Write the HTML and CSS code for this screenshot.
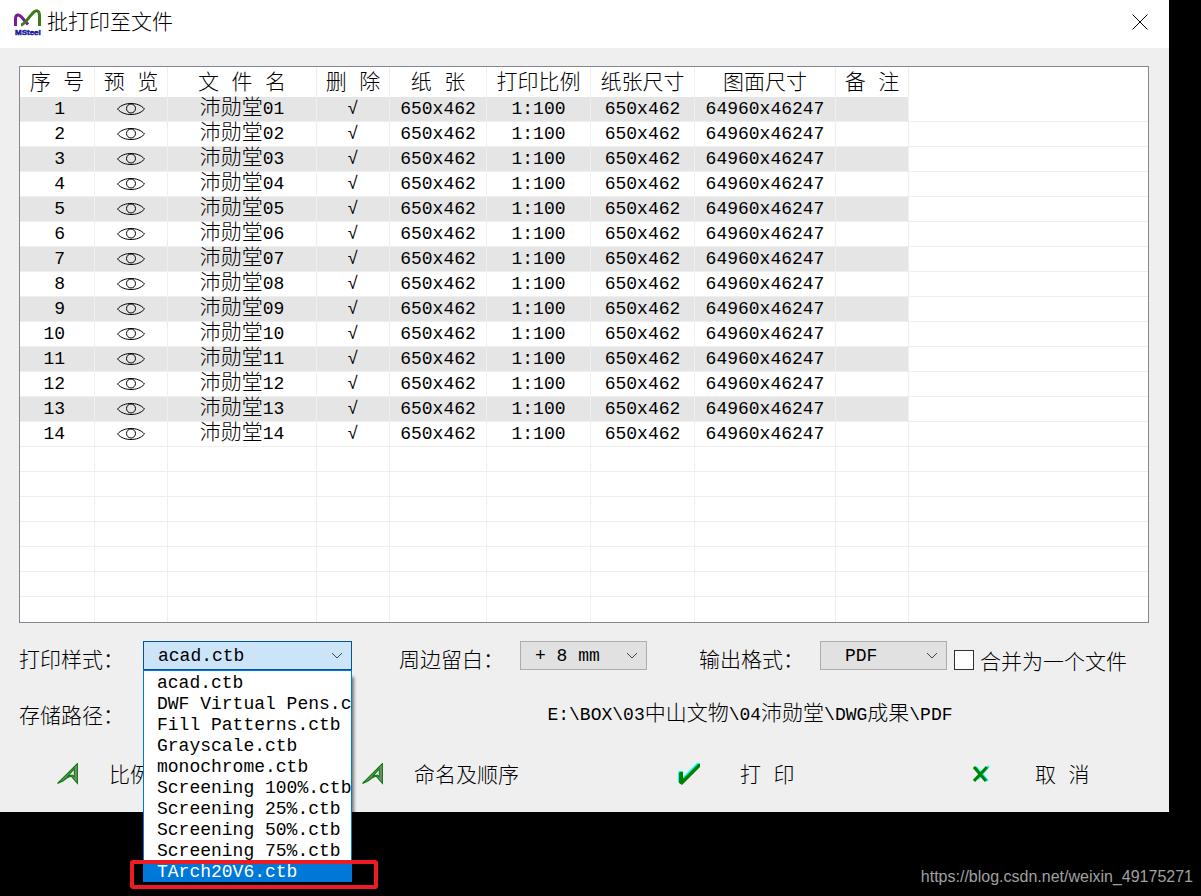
FILE: index.html
```html
<!DOCTYPE html>
<html lang="zh-CN">
	<head>
		<meta charset="UTF-8">
		<title>批打印至文件</title>
		<link rel="stylesheet" href="styles.css">
	</head>
	<body>
		<svg class="symbols">
			<symbol id="eye" viewBox="0 0 28 14">
				<path d="M0.5 7C4 3 9 1.5 14 1.5S24 3 27.5 7C24 11 19 12.5 14 12.5S4 11 0.5 7Z" fill="none" stroke="#000"/>
				<circle cx="14" cy="6.5" r="4.5" fill="none" stroke="#000"/>
			</symbol>
			<symbol id="arrow" viewBox="0 0 21 21">
				<path d="M0.5 19.5L19.5 0.5V19.5L13.5 12.5Q9 14 6 17Z" fill="#808080" stroke="#008000"/>
				<path d="M16.5 5.5V13L14.5 11.5L10.5 12.5Z" fill="#efefef" stroke="#008000"/>
			</symbol>
		</svg>
		<div class="window">
			<div class="title">
				<svg class="logo" viewBox="0 0 27 27">
					<path d="M1.5 17V10C1.5 5 5 5 7.5 8L14 15.5" fill="none" stroke="#7a1a9a" stroke-width="3"/>
					<path d="M7 16C11 15.5 14 9 18 5C22 0 25.5 1 25.5 7V17" fill="none" stroke="#3c7a1e" stroke-width="3"/>
					<text x="1" y="26" class="logo-text">MSteel</text>
				</svg>
				<h3>批打印至文件</h3>
				<button class="close" aria-label="关闭">
					<svg viewBox="0 0 16 16"><path d="M0.5 0.5L15.5 15.5M15.5 0.5L0.5 15.5" stroke="#000"/></svg>
				</button>
			</div>
			<div class="content">
				<div class="list">
					<table>
						<colgroup>
							<col class="c-id"><col class="c-small"><col class="c-name"><col class="c-small"><col class="c-paper">
							<col class="c-size"><col class="c-size"><col class="c-draw"><col class="c-small"><col>
						</colgroup>
						<thead>
							<tr>
								<th>序 号</th>
								<th>预 览</th>
								<th>文 件 名</th>
								<th>删 除</th>
								<th>纸 张</th>
								<th>打印比例</th>
								<th>纸张尺寸</th>
								<th>图面尺寸</th>
								<th>备 注</th>
								<td></td>
							</tr>
						</thead>
						<tbody></tbody>
					</table>
				</div>
				<div class="options">
					<label for="style">打印样式：</label>
					<div class="combo">
						<select id="style" class="wide open">
							<option>acad.ctb</option>
						</select>
						<svg class="down" viewBox="0 0 12 7"><path d="M1 1L6 6L11 1" fill="none" stroke="#444"/></svg>
						<div class="drop">
							<ul role="listbox" aria-label="打印样式">
								<li role="option">acad.ctb</li>
								<li role="option">DWF Virtual Pens.ctb</li>
								<li role="option">Fill Patterns.ctb</li>
								<li role="option">Grayscale.ctb</li>
								<li role="option">monochrome.ctb</li>
								<li role="option">Screening 100%.ctb</li>
								<li role="option">Screening 25%.ctb</li>
								<li role="option">Screening 50%.ctb</li>
								<li role="option">Screening 75%.ctb</li>
								<li role="option" class="active" aria-selected="true">TArch20V6.ctb</li>
							</ul>
							<div class="mark"></div>
						</div>
					</div>
					<label for="margin">周边留白：</label>
					<div class="combo">
						<select id="margin">
							<option>+ 8 mm</option>
						</select>
						<svg class="down" viewBox="0 0 12 7"><path d="M1 1L6 6L11 1" fill="none" stroke="#444"/></svg>
					</div>
					<label for="format">输出格式：</label>
					<div class="combo">
						<select id="format" class="format">
							<option>PDF</option>
						</select>
						<svg class="down" viewBox="0 0 12 7"><path d="M1 1L6 6L11 1" fill="none" stroke="#444"/></svg>
					</div>
					<label class="merge"><input type="checkbox">合并为一个文件</label>
				</div>
				<div class="path">
					<span class="caption">存储路径：</span>
					<span class="dir">E:\BOX\03<span class="cn">中山文物</span>\04<span class="cn">沛勋堂</span>\DWG<span class="cn">成果</span>\PDF</span>
				</div>
				<div class="buttons">
					<button><svg viewBox="0 0 21 21"><use href="#arrow"/></svg>比例</button>
					<button><svg viewBox="0 0 21 21"><use href="#arrow"/></svg>命名及顺序</button>
					<button class="main">
						<svg viewBox="0 0 22 22">
							<path d="M0 10L1 8H5V14L19 0H22V3L4 21L0 19Z" fill="#00ffff"/>
							<path d="M1 10L2 9H5V15H6L20 1H22V4L4 22L1 20Z" fill="#008000"/>
						</svg>打 印
					</button>
					<button class="main">
						<svg viewBox="0 0 22 22">
							<path d="M3 4L15 18M16 3L5 16" stroke="#00ffff" stroke-width="2"/>
							<path d="M1 4L13 18M14 4L1 18" stroke="#008000" stroke-width="3"/>
						</svg>取 消
					</button>
				</div>
			</div>
		</div>
		<a class="source" href="https://blog.csdn.net/weixin_49175271">https://blog.csdn.net/weixin_49175271</a>
		<script type="text/javascript">
			//图纸14张，后面补7个空行
			var str = "";
			for(var i = 1; i <= 21; i++){
				if(i > 14){
					str += "<tr>" + "<td></td>".repeat(10) + "</tr>";
					continue;
				}
				var num = i < 10 ? "0" + i : i;
				str += "<tr class='data'><td><span class='num'>" + i + "</span></td>"
				+ "<td><svg class='eye'><use href='#eye'/></svg></td>"
				+ "<td><span class='cn'>沛勋堂</span>" + num + "</td>"
				+ "<td>√</td><td>650x462</td><td>1:100</td><td>650x462</td><td>64960x46247</td><td></td><td></td></tr>";
			}
			document.querySelector("tbody").innerHTML = str;
		</script>
	</body>
</html>
```
FILE: styles.css
```css
*{
	box-sizing: border-box;
}
body{
	margin: 0;
	min-height: 100vh;
	display: flex;
	flex-direction: column;
	background: #000;
	color: #000;
	font-family: "Liberation Mono", "Noto Sans CJK SC", monospace;
	font-size: 18px;
	font-weight: 300;
	line-height: 24px;
}
button,select,input{
	font: inherit;
	color: inherit;
	margin: 0;
}
.symbols{
	position: absolute;
	width: 0;
	height: 0;
}
.window{
	margin-right: 32px;
	background: #efefef;
}
.title{
	display: flex;
	align-items: center;
	height: 48px;
	padding: 0 21px 4px 14px;
	background: #fff;
}
.logo{
	width: 27px;
	height: 27px;
	margin-right: 6px;
}
.logo-text{
	font: bold 8px "Liberation Sans", sans-serif;
	fill: #1a1a9a;
	stroke: #1a1a9a;
	stroke-width: 0.5;
}
h3{
	flex: 1;
	margin: 0;
	padding-bottom: 4px;
	font: 300 21px "Noto Sans CJK SC", sans-serif;
	line-height: 30px;
}
.close{
	border: 0;
	padding: 0;
	width: 16px;
	height: 16px;
	background: none;
}
.close svg{
	display: block;
}
.content{
	padding: 18px 20px 25px 19px;
}
.list{
	border: 1px solid #828790;
	background: #fff;
}
table{
	width: 100%;
	table-layout: fixed;
	border-spacing: 0;
	text-align: center;
}
.c-id{ width: 75px; }
.c-small{ width: 73px; }
.c-name{ width: 149px; }
.c-paper{ width: 97px; }
.c-size{ width: 104px; }
.c-draw{ width: 141px; }
th,td{
	padding: 0;
	border-right: 1px solid #efefef;
	white-space: nowrap;
}
th{
	height: 30px;
	padding-top: 4px;
	font-size: 21px;
	font-weight: 300;
}
td{
	height: 25px;
	border-bottom: 1px solid #efefef;
}
thead td{
	border-bottom: 0;
}
td:last-child{
	border-right: 0;
}
tr:last-child td{
	border-bottom: 0;
}
.data:nth-child(odd) td:not(:last-child){
	background: #e5e5e5;
}
.num{
	display: inline-block;
	min-width: 22px;
	margin-right: 6px;
	text-align: right;
}
.cn{
	font-size: 21px;
	line-height: 20px;
}
.eye{
	display: block;
	width: 28px;
	height: 14px;
	margin: 0 auto;
}
/*底部选项*/
.options{
	display: grid;
	grid-template-columns: 124fr 256fr 121fr 179fr 121fr 134fr 195fr;
	align-items: end;
	margin-top: 18px;
}
label,.caption{
	padding-bottom: 2px;
	font-family: "Noto Sans CJK SC", sans-serif;
	font-size: 21px;
	line-height: 20px;
	white-space: nowrap;
}
.combo{
	position: relative;
	justify-self: start;
}
select{
	display: block;
	appearance: none;
	width: 127px;
	height: 29px;
	padding: 0 14px;
	border: 1px solid #adadad;
	border-radius: 0;
	background: #e1e1e1;
}
.wide{
	width: 209px;
}
.open{
	border-color: #005499;
	background: #cce4f7;
}
.format{
	padding-left: 24px;
}
.down{
	position: absolute;
	right: 9px;
	top: 11px;
	width: 12px;
	height: 7px;
	pointer-events: none;
}
.drop{
	position: absolute;
	top: 29px;
	left: 0;
	width: 100%;
	z-index: 1;
}
.drop ul{
	margin: 0;
	padding: 1px 0 0;
	list-style: none;
	overflow: hidden;
	border: 1px solid #0078d7;
	border-bottom: 0;
	background: #fff;
	box-shadow: 3px 6px 3px -1px rgba(0,0,0,.5);
}
.drop li{
	height: 21px;
	padding-left: 13px;
	line-height: 22px;
	white-space: nowrap;
}
.drop .active{
	background: #0078d7;
	color: #fff;
}
.mark{
	position: absolute;
	left: -13px;
	right: -26px;
	bottom: -7px;
	height: 29px;
	border: 4px solid #ed1c24;
	border-radius: 3px;
}
.merge{
	display: flex;
	align-items: center;
	gap: 6px;
	padding-bottom: 0;
}
.merge input{
	appearance: none;
	width: 20px;
	height: 20px;
	border: 1px solid #333;
	background: #fff;
}
.path{
	display: grid;
	grid-template-columns: 332fr 798fr;
	align-items: center;
	height: 24px;
	margin-top: 33px;
}
.dir{
	text-align: center;
}
.buttons{
	display: grid;
	grid-template-columns: 305fr 316fr 295fr 176fr;
	margin-top: 36px;
	padding-left: 38px;
}
.buttons button{
	display: flex;
	align-items: flex-start;
	justify-self: start;
	gap: 30px;
	height: 24px;
	padding: 0;
	border: 0;
	background: none;
	font-size: 21px;
	line-height: 28px;
}
.buttons .main{
	gap: 40px;
}
.buttons svg{
	width: 22px;
	height: 22px;
}
.source{
	margin: auto 8px 7px auto;
	color: #a0a0a0;
	font: 16px "Liberation Sans", sans-serif;
	line-height: 24px;
	text-decoration: none;
}
```
